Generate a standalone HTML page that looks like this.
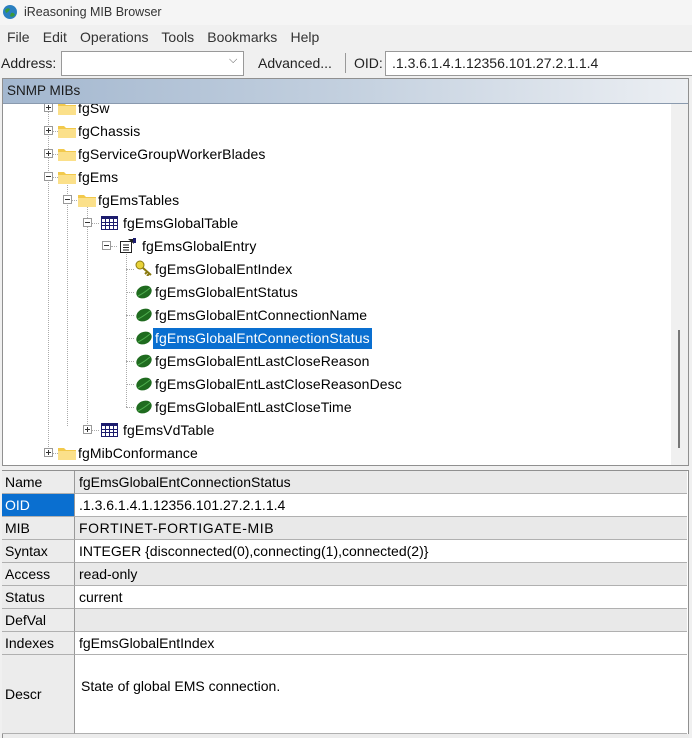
<!DOCTYPE html>
<html><head><meta charset="utf-8"><style>
*{margin:0;padding:0;box-sizing:border-box}
body{width:692px;height:738px;overflow:hidden;background:#f0f0f0;font-family:"Liberation Sans",sans-serif;position:relative;color:#000}
.a{position:absolute}
.t{font-size:13px;white-space:nowrap}
.row{position:absolute;height:22px;line-height:22px;font-size:14px;white-space:nowrap;letter-spacing:0.1px}
.exp{position:absolute;width:9px;height:9px;border:1px solid #999;background:#fff}
.exp:before{content:"";position:absolute;left:1px;top:3px;width:5px;height:1px;background:#333}
.exp.p:after{content:"";position:absolute;left:3px;top:1px;width:1px;height:5px;background:#333}
.vd{position:absolute;border-left:1px dotted #aaa;width:0}
.hd{position:absolute;border-top:1px dotted #aaa;height:0}
.lab{position:absolute;left:2px;width:73px;background:#ececec;border-bottom:1px solid #b0b0b0;border-right:1px solid #999;font-size:14px;padding-left:3px;line-height:22px}
.val{position:absolute;left:75px;width:612px;border-bottom:1px solid #b0b0b0;font-size:14px;padding-left:4px;line-height:22px;white-space:nowrap}
</style></head><body>
<div class="a" style="left:0;top:0;width:692px;height:25px;background:#f5f5f5"></div>
<svg class="a" style="left:2px;top:4px" width="16" height="16" viewBox="0 0 16 16"><circle cx="8" cy="8" r="7" fill="#2a7fc0"/><path d="M3 6 Q6 3 8 5 Q7 8 4 9Z M9 9 Q12 8 13 11 Q10 14 8 12Z" fill="#3a9a3a"/></svg>
<div class="a t" style="left:24px;top:5px;font-size:12.5px;color:#333">iReasoning MIB Browser</div>
<div class="a" style="left:7px;top:29px;font-size:14px;color:#333;word-spacing:0.5px">File&nbsp;&nbsp; Edit&nbsp;&nbsp; Operations&nbsp;&nbsp; Tools&nbsp;&nbsp; Bookmarks&nbsp;&nbsp; Help</div>
<div class="a" style="left:1px;top:55px;font-size:14px;color:#222">Address:</div>
<div class="a" style="left:61px;top:51px;width:183px;height:25px;background:#fff;border:1px solid #999"></div>
<div class="a" style="left:229px;top:54px;font-size:11px;color:#555">⌵</div>
<div class="a" style="left:258px;top:55px;font-size:14px;color:#222">Advanced...</div>
<div class="a" style="left:345px;top:53px;width:1px;height:20px;background:#999"></div>
<div class="a" style="left:354px;top:55px;font-size:14px;color:#222">OID:</div>
<div class="a" style="left:385px;top:51px;width:310px;height:25px;background:#fff;border:1px solid #999;font-size:14px;padding:3px 0 0 6px;color:#222">.1.3.6.1.4.1.12356.101.27.2.1.1.4</div>
<div class="a" style="left:2px;top:78px;width:687px;height:388px;background:#fff;border:1px solid #909090"></div>
<div class="a" style="left:671px;top:104px;width:17px;height:361px;background:#f0f0f0"></div>
<div class="a" style="left:678px;top:330px;width:2px;height:118px;background:#777"></div>
<div class="a" style="left:3px;top:104px;width:668px;height:361px;overflow:hidden">
<div style="position:absolute;left:-3px;top:-104px;width:700px;height:600px">
<div class="vd" style="left:48px;top:104px;height:345px"></div>
<div class="vd" style="left:67px;top:182px;height:244px"></div>
<div class="vd" style="left:87px;top:205px;height:221px"></div>
<div class="vd" style="left:126px;top:251px;height:156px"></div>
<div class="exp p" style="left:44px;top:103px"></div>
<div class="exp p" style="left:44px;top:126px"></div><div class="hd" style="left:53px;top:131px;width:5px"></div>
<div class="exp p" style="left:44px;top:149px"></div><div class="hd" style="left:53px;top:154px;width:5px"></div>
<div class="exp" style="left:44px;top:172px"></div><div class="hd" style="left:53px;top:177px;width:5px"></div>
<div class="exp" style="left:63px;top:195px"></div><div class="hd" style="left:72px;top:200px;width:5px"></div>
<div class="exp" style="left:83px;top:218px"></div><div class="hd" style="left:92px;top:223px;width:7px"></div>
<div class="exp" style="left:102px;top:241px"></div><div class="hd" style="left:111px;top:246px;width:6px"></div>
<div class="hd" style="left:126px;top:269px;width:8px"></div>
<div class="hd" style="left:126px;top:292px;width:8px"></div>
<div class="hd" style="left:126px;top:315px;width:8px"></div>
<div class="hd" style="left:126px;top:338px;width:8px"></div>
<div class="hd" style="left:126px;top:361px;width:8px"></div>
<div class="hd" style="left:126px;top:384px;width:8px"></div>
<div class="hd" style="left:126px;top:407px;width:8px"></div>
<div class="exp p" style="left:83px;top:425px"></div><div class="hd" style="left:92px;top:430px;width:7px"></div>
<div class="exp p" style="left:44px;top:448px"></div><div class="hd" style="left:53px;top:453px;width:5px"></div>
<svg class="a" style="left:58px;top:101px" width="18" height="14"><path d="M0 2h6l2 2h10v10H0z" fill="#f2c94c"/><path d="M0 5h18v9H0z" fill="#fbe08a"/></svg>
<svg class="a" style="left:58px;top:124px" width="18" height="14"><path d="M0 2h6l2 2h10v10H0z" fill="#f2c94c"/><path d="M0 5h18v9H0z" fill="#fbe08a"/></svg>
<svg class="a" style="left:58px;top:147px" width="18" height="14"><path d="M0 2h6l2 2h10v10H0z" fill="#f2c94c"/><path d="M0 5h18v9H0z" fill="#fbe08a"/></svg>
<svg class="a" style="left:58px;top:170px" width="18" height="14"><path d="M0 2h6l2 2h10v10H0z" fill="#f2c94c"/><path d="M0 5h18v9H0z" fill="#fbe08a"/></svg>
<svg class="a" style="left:78px;top:193px" width="18" height="14"><path d="M0 2h6l2 2h10v10H0z" fill="#f2c94c"/><path d="M0 5h18v9H0z" fill="#fbe08a"/></svg>
<svg class="a" style="left:58px;top:446px" width="18" height="14"><path d="M0 2h6l2 2h10v10H0z" fill="#f2c94c"/><path d="M0 5h18v9H0z" fill="#fbe08a"/></svg>
<svg class="a" style="left:101px;top:216px" width="17" height="14"><rect x="0.5" y="0.5" width="16" height="13" fill="#fff" stroke="#1c1c6e"/><rect x="0" y="0" width="17" height="3" fill="#1c1c6e"/><path d="M0 6.5h17M0 9.5h17M4.5 3v11M8.5 3v11M12.5 3v11" stroke="#1c1c6e"/></svg>
<svg class="a" style="left:101px;top:423px" width="17" height="14"><rect x="0.5" y="0.5" width="16" height="13" fill="#fff" stroke="#1c1c6e"/><rect x="0" y="0" width="17" height="3" fill="#1c1c6e"/><path d="M0 6.5h17M0 9.5h17M4.5 3v11M8.5 3v11M12.5 3v11" stroke="#1c1c6e"/></svg>
<svg class="a" style="left:119px;top:238px" width="18" height="16"><rect x="1.5" y="3.5" width="11" height="11" fill="#fff" stroke="#222"/><path d="M4 7h6M4 9.5h6M4 12h6" stroke="#222"/><path d="M9 1l6 0 0 5z" fill="#222"/><rect x="14" y="0" width="3" height="5" fill="#1c1c6e"/></svg>
<svg class="a" style="left:135px;top:260px" width="18" height="16"><circle cx="5" cy="5" r="4" fill="#e8d23a" stroke="#8a7a10"/><path d="M8 8l8 7M12 12l-2 2M14 14l-2 2" stroke="#8a7a10" stroke-width="2"/></svg>
<svg class="a" style="left:135px;top:284px" width="18" height="16"><ellipse cx="9" cy="8" rx="8" ry="6" transform="rotate(-25 9 8)" fill="#1f6b1f"/><path d="M3 12Q9 9 15 4" stroke="#4fae4f" fill="none"/></svg>
<svg class="a" style="left:135px;top:307px" width="18" height="16"><ellipse cx="9" cy="8" rx="8" ry="6" transform="rotate(-25 9 8)" fill="#1f6b1f"/><path d="M3 12Q9 9 15 4" stroke="#4fae4f" fill="none"/></svg>
<svg class="a" style="left:135px;top:330px" width="18" height="16"><ellipse cx="9" cy="8" rx="8" ry="6" transform="rotate(-25 9 8)" fill="#1f6b1f"/><path d="M3 12Q9 9 15 4" stroke="#4fae4f" fill="none"/></svg>
<svg class="a" style="left:135px;top:353px" width="18" height="16"><ellipse cx="9" cy="8" rx="8" ry="6" transform="rotate(-25 9 8)" fill="#1f6b1f"/><path d="M3 12Q9 9 15 4" stroke="#4fae4f" fill="none"/></svg>
<svg class="a" style="left:135px;top:376px" width="18" height="16"><ellipse cx="9" cy="8" rx="8" ry="6" transform="rotate(-25 9 8)" fill="#1f6b1f"/><path d="M3 12Q9 9 15 4" stroke="#4fae4f" fill="none"/></svg>
<svg class="a" style="left:135px;top:399px" width="18" height="16"><ellipse cx="9" cy="8" rx="8" ry="6" transform="rotate(-25 9 8)" fill="#1f6b1f"/><path d="M3 12Q9 9 15 4" stroke="#4fae4f" fill="none"/></svg>
<div class="row" style="left:78px;top:97px">fgSw</div>
<div class="row" style="left:78px;top:120px">fgChassis</div>
<div class="row" style="left:78px;top:143px">fgServiceGroupWorkerBlades</div>
<div class="row" style="left:78px;top:166px">fgEms</div>
<div class="row" style="left:98px;top:189px">fgEmsTables</div>
<div class="row" style="left:123px;top:212px">fgEmsGlobalTable</div>
<div class="row" style="left:142px;top:235px">fgEmsGlobalEntry</div>
<div class="row" style="left:155px;top:258px">fgEmsGlobalEntIndex</div>
<div class="row" style="left:155px;top:281px">fgEmsGlobalEntStatus</div>
<div class="row" style="left:155px;top:304px">fgEmsGlobalEntConnectionName</div>
<div class="row" style="left:153px;top:328px;background:#0a6fd0;color:#fff;padding:0 2px;height:21px;line-height:21px">fgEmsGlobalEntConnectionStatus</div>
<div class="row" style="left:155px;top:350px">fgEmsGlobalEntLastCloseReason</div>
<div class="row" style="left:155px;top:373px">fgEmsGlobalEntLastCloseReasonDesc</div>
<div class="row" style="left:155px;top:396px">fgEmsGlobalEntLastCloseTime</div>
<div class="row" style="left:123px;top:419px">fgEmsVdTable</div>
<div class="row" style="left:78px;top:442px">fgMibConformance</div>
</div></div>
<div class="a" style="left:3px;top:79px;width:685px;height:25px;background:linear-gradient(to right,#a3b7cf,#c3d0df 50%,#eceff3);border-bottom:1px solid #8a9aae;font-size:13.5px;line-height:24px;padding-left:4px;color:#1a1a1a">SNMP MIBs</div>
<div class="a" style="left:2px;top:470px;width:687px;height:268px;background:#fff;border:1px solid #909090;border-bottom:none"></div>
<div class="lab" style="top:471px;height:23px">Name</div><div class="val" style="top:471px;height:23px;background:#e9e9e9">fgEmsGlobalEntConnectionStatus</div>
<div class="lab" style="top:494px;height:23px;background:#0a6fd0;color:#fff">OID</div><div class="val" style="top:494px;height:23px;background:#fff">.1.3.6.1.4.1.12356.101.27.2.1.1.4</div>
<div class="lab" style="top:517px;height:23px">MIB</div><div class="val" style="top:517px;height:23px;background:#e9e9e9;letter-spacing:0.6px">FORTINET-FORTIGATE-MIB</div>
<div class="lab" style="top:540px;height:23px">Syntax</div><div class="val" style="top:540px;height:23px;background:#fff">INTEGER {disconnected(0),connecting(1),connected(2)}</div>
<div class="lab" style="top:563px;height:23px">Access</div><div class="val" style="top:563px;height:23px;background:#e9e9e9">read-only</div>
<div class="lab" style="top:586px;height:23px">Status</div><div class="val" style="top:586px;height:23px;background:#fff">current</div>
<div class="lab" style="top:609px;height:23px">DefVal</div><div class="val" style="top:609px;height:23px;background:#e9e9e9"></div>
<div class="lab" style="top:632px;height:23px">Indexes</div><div class="val" style="top:632px;height:23px;background:#fff">fgEmsGlobalEntIndex</div>
<div class="lab" style="top:655px;height:79px;line-height:79px">Descr</div><div class="val" style="top:655px;height:79px;line-height:63px;background:#fff;padding-left:6px">State of global EMS connection.</div>
<div class="a" style="left:2px;top:734px;width:687px;height:4px;background:#ececec;border-left:1px solid #909090"></div>
</body></html>
